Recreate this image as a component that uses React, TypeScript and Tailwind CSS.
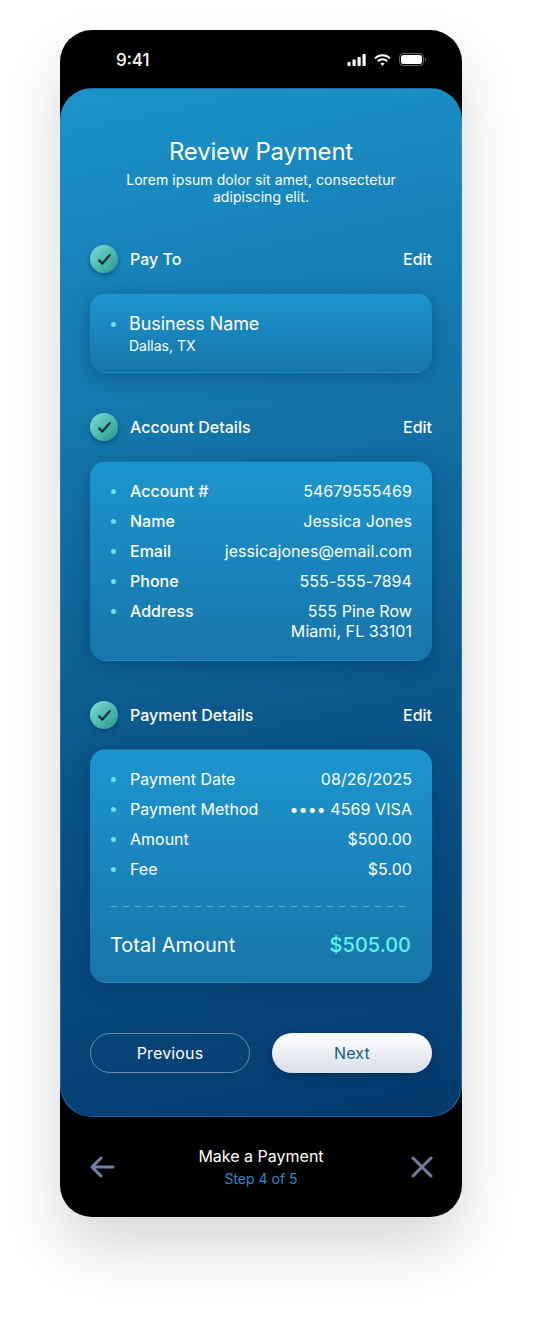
import type React from "react";

const font = { fontFamily: '"Inter", "Noto Sans", sans-serif' };

// ─── Status bar icons ───────────────────────────────────────────────────────

const StatusIcons: React.FC = () => (
  <div className="flex items-center gap-[8px]">
    <svg width="19" height="12" viewBox="0 0 19 12" fill="white">
      <rect x="0.5" y="8" width="3.2" height="4" rx="0.8" />
      <rect x="5.5" y="5.5" width="3.2" height="6.5" rx="0.8" />
      <rect x="10.5" y="3" width="3.2" height="9" rx="0.8" />
      <rect x="15.5" y="0" width="3.2" height="12" rx="0.8" />
    </svg>
    <svg width="17" height="12" viewBox="0 0 17 12" fill="none" stroke="white" strokeWidth="2">
      <path d="M1 4.4C5.3 0.3 11.7 0.3 16 4.4" />
      <path d="M3.8 7.2C6.5 4.7 10.5 4.7 13.2 7.2" />
      <path d="M8.5 11.8L6.3 9.5C7.6 8.5 9.4 8.5 10.7 9.5Z" fill="white" stroke="none" />
    </svg>
    <svg width="27" height="13" viewBox="0 0 27 13" fill="none">
      <rect x="0.5" y="0.5" width="24" height="12" rx="3.8" stroke="white" strokeOpacity="0.4" />
      <rect x="2" y="2" width="21" height="9" rx="2.5" fill="white" />
      <path d="M26 4.5C26.6 4.8 27 5.6 27 6.5C27 7.4 26.6 8.2 26 8.5Z" fill="white" fillOpacity="0.4" />
    </svg>
  </div>
);

// ─── Section header ─────────────────────────────────────────────────────────

const SectionHeader: React.FC<{ title: string }> = ({ title }) => (
  <div className="flex h-7 items-center">
    <div className="flex h-7 w-7 items-center justify-center rounded-full bg-gradient-to-br from-[#7ce0d4] to-[#1c978f] shadow-[0_2px_5px_rgba(0,30,70,0.45)]">
      <svg width="15" height="13" viewBox="0 0 15 13" fill="none" stroke="#14323f" strokeWidth="2.3" strokeLinecap="round" strokeLinejoin="round">
        <path d="M2.2 7.4L5.4 10.6L12.6 2.2" />
      </svg>
    </div>
    <span className="ml-3 text-base leading-5 font-medium text-white">{title}</span>
    <span className="ml-auto text-base leading-5 font-medium text-white">Edit</span>
  </div>
);

const Dot: React.FC = () => (
  <span className="mr-[14px] h-[5px] w-[5px] shrink-0 rounded-full bg-[#6fe0da]" />
);

const Row: React.FC<{ label: string; value: React.ReactNode; strong?: boolean }> = ({ label, value, strong }) => (
  <div className="flex items-start text-base leading-5 text-white">
    <div className="flex h-5 items-center">
      <Dot />
      <span className={strong ? "font-medium" : "font-normal"}>{label}</span>
    </div>
    <div className="ml-auto text-right font-normal tracking-[0.004em]">{value}</div>
  </div>
);

const Card: React.FC<{ className?: string; children: React.ReactNode }> = ({ className, children }) => (
  <div className={`rounded-2xl border border-[#1f7fb2]/10 bg-gradient-to-b from-[#1c95cf] to-[#1775a9] shadow-[0_4px_20px_rgba(0,35,80,0.35)] ${className ?? ""}`}>
    {children}
  </div>
);

export default function App() {
  return (
    <div className="min-h-[1327px] bg-white pt-[30px] pl-[60px]" style={font}>
      <div className="flex h-[1187px] w-[402px] flex-col rounded-[32px] bg-black shadow-[0_30px_60px_rgba(0,0,0,0.16)]">
        {/* status bar */}
        <div className="flex h-[58px] shrink-0 items-center justify-between pt-[1px] pr-[36px] pl-[56px]">
          <span className="text-[17px] leading-[22px] font-medium text-white">9:41</span>
          <StatusIcons />
        </div>

        {/* main panel */}
        <div className="flex h-[1029px] shrink-0 flex-col rounded-[32px] border border-[#2a8fc4]/60 border-b-[#1a5f9c] bg-[linear-gradient(168deg,#1b93cb_0%,#1478ad_30%,#0b5689_62%,#033a6e_100%)] px-[29px]">
          <h1 className="mt-[48px] text-center text-2xl leading-[30px] font-normal tracking-[-0.2px] text-white">Review Payment</h1>
          <p className="mx-auto mt-[4px] w-[300px] text-center text-sm leading-[17px] tracking-[0.08px] text-white">
            Lorem ipsum dolor sit amet, consectetur adipiscing elit.
          </p>

          <div className="mt-[40px]">
            <SectionHeader title="Pay To" />
          </div>
          <Card className="mt-5 h-20 pr-[19px] pl-5 pt-[20px]">
            <div className="flex h-5 items-center text-lg leading-5 text-white">
              <Dot />
              <span className="-ml-[1px] font-normal tracking-[-0.005em]">Business Name</span>
            </div>
            <div className="mt-[2px] pl-[18px] text-sm leading-5 font-normal text-white">Dallas, TX</div>
          </Card>

          <div className="mt-10">
            <SectionHeader title="Account Details" />
          </div>
          <Card className="mt-5 flex h-[200px] flex-col gap-[10px] pr-[19px] pl-5 pt-[19px]">
            <Row strong label="Account #" value="54679555469" />
            <Row strong label="Name" value="Jessica Jones" />
            <Row strong label="Email" value="jessicajones@email.com" />
            <Row strong label="Phone" value="555-555-7894" />
            <Row
              strong
              label="Address"
              value={
                <>
                  555 Pine Row
                  <br />
                  Miami, FL 33101
                </>
              }
            />
          </Card>

          <div className="mt-10">
            <SectionHeader title="Payment Details" />
          </div>
          <Card className="mt-5 h-[234px] pr-[19px] pl-5 pt-[19px]">
            <div className="flex flex-col gap-[10px]">
              <Row label="Payment Date" value="08/26/2025" />
              <Row label="Payment Method" value="•••• 4569 VISA" />
              <Row label="Amount" value="$500.00" />
              <Row label="Fee" value="$5.00" />
            </div>
            <div className="mt-[27px] h-px w-[296px] bg-[repeating-linear-gradient(90deg,rgba(255,255,255,0.35)_0,rgba(255,255,255,0.35)_6px,transparent_6px,transparent_12px)]" />
            <div className="mt-[26px] -ml-[1px] flex items-center justify-between pr-[1px] text-xl leading-6">
              <span className="font-normal text-white">Total Amount</span>
              <span className="font-medium text-[#5ff5ec]">$505.00</span>
            </div>
          </Card>

          <div className="mt-[50px] flex justify-between">
            <button type="button" className="h-10 w-40 rounded-full border border-white/40 text-base font-normal tracking-[0.01em] text-white">
              Previous
            </button>
            <button type="button" className="h-10 w-40 rounded-full bg-gradient-to-b from-white to-[#d9dfe8] text-base font-normal tracking-[0.01em] text-[#0f5a8c] shadow-[0_3px_8px_rgba(0,20,60,0.35)]">
              Next
            </button>
          </div>
        </div>

        {/* footer */}
        <div className="flex flex-1 items-center justify-between pr-[28px] pl-[30px]">
          <svg width="25" height="22" viewBox="0 0 25 22" fill="none" stroke="#6f80a0" strokeWidth="3" strokeLinecap="round" strokeLinejoin="round">
            <path d="M23 11H2.5M11 2L2 11L11 20" />
          </svg>
          <div className="-ml-[3px] text-center">
            <div className="text-base leading-5 text-white">Make a Payment</div>
            <div className="mt-[3px] text-sm leading-5 text-[#1f8fc9]">Step 4 of 5</div>
          </div>
          <svg width="24" height="22" viewBox="0 0 24 22" fill="none" stroke="#6f80a0" strokeWidth="3" strokeLinecap="round">
            <path d="M3 2L21 20M21 2L3 20" />
          </svg>
        </div>
      </div>
    </div>
  );
}
